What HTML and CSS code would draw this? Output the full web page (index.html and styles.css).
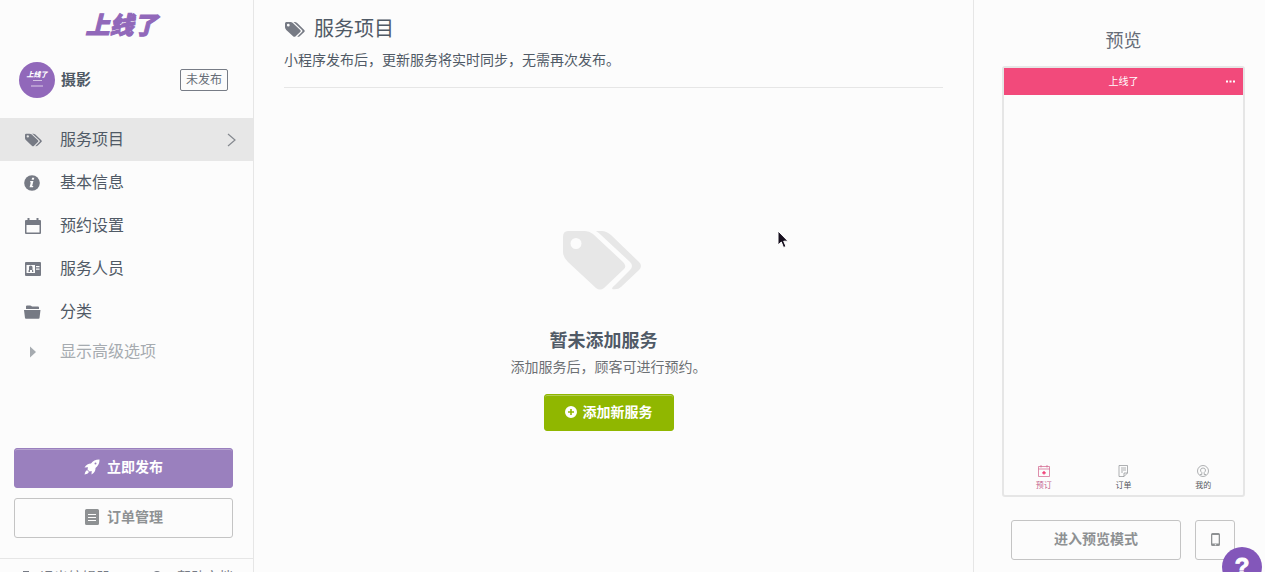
FILE: index.html
```html
<!DOCTYPE html>
<html lang="zh-CN">
<head>
<meta charset="utf-8">
<meta name="viewport" content="width=device-width, initial-scale=1">
<title>上线了 - 服务项目</title>
<link rel="stylesheet" href="styles.css">
</head>
<body>
<svg class="sprite" aria-hidden="true">
  <symbol id="tags" viewBox="0 0 79 59">
    <path d="M5 0H22Q26 0 30 3L60 31Q64 35 61 38L41 57Q37 60 33 57L5 31Q0 26 0 21V6Q0 0 5 0ZM13 7A5.500 5.500 0 1 0 13 18A5.500 5.500 0 1 0 13 7Z" fill-rule="evenodd"/>
    <path d="M33 0H39Q43 0 48 4L76 31Q80 35 76 39L58 56Q55 59 49 58Q49 56 52 54L67 39Q71 35 67 31L38 4Q36 2 33 0Z"/>
  </symbol>
</svg>
<div class="shell">
  <aside class="sidebar">
    <div class="logo">上线了</div>
    <div class="site">
      <div class="avatar"><b class="avatar-name">上线了</b><span class="avatar-line"></span><span class="avatar-sub"></span></div>
      <strong class="site-name">摄影</strong>
      <span class="badge">未发布</span>
    </div>
    <nav class="nav">
      <a class="nav-item active" href="#services">
        <svg class="nav-icon" viewBox="0 0 18 18"><use href="#tags" x="1" y="2" width="17" height="14"/></svg>
        <span>服务项目</span>
        <svg class="chevron" viewBox="0 0 10 16"><path d="M2 2 9 8l-7 6"/></svg>
      </a>
      <a class="nav-item" href="#info">
        <svg class="nav-icon" viewBox="0 0 18 18"><circle cx="8" cy="9" r="7.800"/><path class="cut" d="M8.100 3.800h2.200l-.5 2H7.600zM6.300 7h3.100l-1.200 5h1.100l-.3 1.200H5.600L6.800 8.200H6z"/></svg>
        <span>基本信息</span>
      </a>
      <a class="nav-item" href="#booking">
        <svg class="nav-icon" viewBox="0 0 18 18"><path fill-rule="evenodd" d="M2 3h1.500V1h2v2h7V1h2v2H16q1 0 1 1v12q0 1-1 1H2q-1 0-1-1V4q0-1 1-1zm.5 5v7.500h13V8z"/></svg>
        <span>预约设置</span>
      </a>
      <a class="nav-item" href="#staff">
        <svg class="nav-icon" viewBox="0 0 18 18"><path d="M2 2h14q1 0 1 1v12q0 1-1 1H2q-1 0-1-1V3q0-1 1-1z"/><path class="cut" fill-rule="evenodd" d="M2.500 5h8.500v8H2.500zM4.500 12v-1.500L5 10V7q0-1.500 1.700-1.500T8.500 7v3l.8.500V12H8v-2H6v2zM12 6h3.500v1.200H12zM12 8.500h3.500v1.200H12z"/></svg>
        <span>服务人员</span>
      </a>
      <a class="nav-item" href="#category">
        <svg class="nav-icon" viewBox="0 0 18 18"><path d="M2 6V3.500q0-1 1-1h3q1 0 2 1h6q1 0 1 1V6zM0 7h16.500l-1 8q0 .8-1 .8H2q-1 0-1-.8z"/></svg>
        <span>分类</span>
      </a>
      <button class="nav-item more" type="button">
        <svg class="nav-icon" viewBox="0 0 18 18"><path d="M6 3.500v11L12 9z"/></svg>
        <span>显示高级选项</span>
      </button>
    </nav>
    <div class="actions">
      <button class="btn btn-primary" type="button">
        <svg class="btn-icon" viewBox="0 0 16 16"><path d="M15.500.5Q10 .3 7 4.500 3 4.500.5 8.500L4 8.300 3.500 10.500 5.500 12.500 7.700 12 7.500 15.500Q11.700 13 11.500 9 15.700 6 15.500.5ZM3 11Q1 12 .5 15.500 4 15 5 13Z"/><circle class="porthole" cx="11.500" cy="4.500" r="1"/></svg>
        <span>立即发布</span>
      </button>
      <button class="btn btn-outline" type="button">
        <svg class="btn-icon" viewBox="0 0 16 16"><path fill-rule="evenodd" d="M2.500 0h11Q15 0 15 1.500v13q0 1.500-1.500 1.500h-11Q1 16 1 14.500v-13Q1 0 2.500 0zM4 5v1h8V5zm0 3v1h8V8zm0 3v1h8v-1z"/></svg>
        <span>订单管理</span>
      </button>
    </div>
    <footer class="footer">
      <a class="footer-link" href="#exit"><svg class="footer-icon" viewBox="0 0 12 14"><path d="M3 1h6v12H3z"/></svg>退出编辑器</a>
      <a class="footer-link" href="#docs"><svg class="footer-icon" viewBox="0 0 12 14"><circle cx="6" cy="6" r="5"/></svg>帮助文档</a>
    </footer>
  </aside>

  <main class="main">
    <header class="heading">
      <h1 class="title"><svg class="title-icon" viewBox="0 0 79 59"><use href="#tags"/></svg>服务项目</h1>
      <p class="subtitle">小程序发布后，更新服务将实时同步，无需再次发布。</p>
    </header>
    <section class="empty">
      <svg class="empty-icon" viewBox="0 0 79 59"><use href="#tags"/></svg>
      <h2 class="empty-title">暂未添加服务</h2>
      <p class="empty-text">添加服务后，顾客可进行预约。</p>
      <button class="btn btn-add" type="button">
        <svg class="add-icon" viewBox="0 0 12 12"><path fill-rule="evenodd" d="M6 0a6 6 0 1 1 0 12A6 6 0 0 1 6 0zM5.200 3v2.200H3v1.600h2.200V9h1.600V6.800H9V5.200H6.800V3z"/></svg>
        <span>添加新服务</span>
      </button>
    </section>
  </main>

  <aside class="preview">
    <h2 class="preview-title">预览</h2>
    <div class="phone">
      <div class="phone-bar"><span class="phone-name">上线了</span><svg class="dots" viewBox="0 0 9 3"><path d="M0 .5h2v2H0zM3.500.5h2v2h-2zM7 .5h2v2H7z"/></svg></div>
      <div class="tabs">
        <div class="tab selected"><svg class="tab-icon" viewBox="0 0 12 12"><path d="M.5 1.500h11v10H.5zM.5 4h11M3 0v2.500M9 0v2.500"/><path class="plus" d="M6 6v3.600M4.200 7.800h3.600"/></svg><span>预订</span></div>
        <div class="tab"><svg class="tab-icon" viewBox="0 0 12 12"><path d="M2 .5h8.500V8l-3.500 3.500H2zM10.500 8H7v3.500M4 3h5M4 5h5M4 7h2"/></svg><span>订单</span></div>
        <div class="tab"><svg class="tab-icon" viewBox="0 0 12 12"><circle cx="6" cy="6" r="5.500"/><path d="M3 9.500h1.800V7.500Q3.500 6.500 3.500 5 3.800 3 6 3T8.500 5Q8.500 6.500 7.200 7.500v2H9"/></svg><span>我的</span></div>
      </div>
    </div>
    <div class="preview-actions">
      <button class="btn btn-outline btn-preview" type="button">进入预览模式</button>
      <button class="btn btn-outline btn-phone" type="button" aria-label="手机预览"><svg class="device" viewBox="0 0 9 13"><path fill-rule="evenodd" d="M1.500 0h6Q9 0 9 1.500v10Q9 13 7.500 13h-6Q0 13 0 11.500v-10Q0 0 1.500 0zM1.300 2v8.500h6.400V2zM3.800 11.200v1h1.400v-1z"/></svg></button>
    </div>
  </aside>
</div>
<button class="help" type="button" aria-label="帮助">?</button>
<svg class="cursor" viewBox="0 0 12 19" aria-hidden="true"><path d="M1 1v14l3.300-3 2.200 5.500 2.500-1-2.300-5.300H11z"/></svg>
</body>
</html>
```
FILE: styles.css
```css
* { box-sizing: border-box; }
body {
  margin: 0;
  background: #fcfcfc;
  color: #505a66;
  font-family: "Liberation Sans", "Noto Sans CJK SC", sans-serif;
  font-size: 14px;
  line-height: 20px;
  overflow: hidden;
}
h1, h2, p { margin: 0; font-weight: 400; }
button { font: inherit; cursor: pointer; }
a { color: inherit; text-decoration: none; }
svg { flex: none; fill: currentColor; }
.sprite { position: absolute; width: 0; height: 0; }

.shell {
  display: grid;
  grid-template-columns: 254px 1fr 292px;
  height: 100vh;
  overflow: hidden;
}

/* Sidebar */
.sidebar {
  display: flex;
  flex-direction: column;
  min-height: 0;
  border-right: 1px solid #e6e6e6;
  overflow: hidden;
}
.logo {
  padding: 12px 10px 0 0;
  color: #9168ba;
  font-size: 24px;
  font-style: italic;
  font-weight: 900;
  line-height: 28px;
  text-align: center;
  -webkit-text-stroke: 1px currentColor;
}
.site {
  display: flex;
  align-items: center;
  gap: 6px;
  padding: 22px 25px 20px 19px;
}
.avatar {
  display: flex;
  flex-direction: column;
  align-items: center;
  width: 36px;
  height: 36px;
  padding-top: 8px;
  border-radius: 50%;
  background: #9168ba;
  color: #fff;
}
.avatar-name { font-size: 7px; font-style: italic; line-height: 10px; font-weight: 900; }
.avatar-line { width: 9px; height: 1px; background: #d3c2e3; }
.avatar-sub { width: 12px; height: 2px; margin-top: 4px; background: #b79bd1; }
.site-name { flex: 1; font-size: 15px; }
.badge {
  padding: 0 5px;
  border: 1px solid #777c86;
  border-radius: 2px;
  color: #666c77;
  font-size: 12px;
}
.nav { display: flex; flex-direction: column; }
.nav-item {
  display: flex;
  align-items: center;
  gap: 18px;
  height: 43px;
  padding: 0 17px 0 24px;
  font-size: 16px;
}
.nav-item span { flex: 1; text-align: left; }
.nav-icon { width: 18px; height: 18px; color: #767a84; }
.nav-item.active { background: #e7e7e7; }
.cut { fill: #fcfcfc; }
.chevron { width: 10px; height: 16px; fill: none; stroke: #85898f; stroke-width: 1.2; }
.more {
  height: 37px;
  border: 0;
  background: none;
  color: #a6abb0;
}
.more .nav-icon { color: #a6abb0; }
.actions {
  display: flex;
  flex-direction: column;
  gap: 10px;
  padding: 78px 20px 20px 14px;
}
.btn {
  display: flex;
  align-items: center;
  justify-content: center;
  gap: 7px;
  height: 40px;
  padding: 0 0 2px;
  border: 1px solid transparent;
  border-radius: 3px;
  font-weight: 700;
}
.btn-icon { width: 16px; height: 16px; }
.porthole { fill: #9a80be; }
.btn-primary {
  border-color: #9a80be;
  background: #9a80be;
  box-shadow: inset 0 1px #b6a3d0;
  color: #fff;
}
.btn-outline {
  border-color: #c4c4c4;
  background: transparent;
  color: #8e9193;
}
.footer {
  display: flex;
  justify-content: space-between;
  flex: none;
  padding: 8px 20px;
  border-top: 1px solid #e6e6e6;
  color: #767a84;
}
.footer-link { display: flex; align-items: center; gap: 8px; white-space: nowrap; }
.footer-link + .footer-link { gap: 14px; }
.footer-icon { width: 12px; height: 14px; }

/* Service list */
.main { min-width: 0; padding: 0 30px; }
.heading { padding: 15px 0 17px; border-bottom: 1px solid #e6e6e6; }
.title {
  display: flex;
  align-items: center;
  gap: 9px;
  padding-left: 1px;
  font-size: 20px;
  line-height: 28px;
}
.title-icon { width: 20px; height: 15px; color: #767a84; }
.subtitle { padding-top: 7px; }
.empty {
  display: flex;
  flex-direction: column;
  align-items: center;
  padding: 143px 10px 0 0;
}
.empty-icon { width: 79px; height: 59px; margin-right: 12px; color: #e7e7e7; }
.empty-title {
  margin-right: 10px;
  padding-top: 38px;
  font-size: 18px;
  font-weight: 700;
  line-height: 26px;
}
.empty-text { padding: 3px 0 17px; color: #6c7074; }
.btn-add {
  width: 130px;
  height: 37px;
  gap: 6px;
  border-color: #90b700;
  background: #90b700;
  box-shadow: inset 0 1px #b2cc55;
  color: #fff;
}
.add-icon { width: 12px; height: 12px; }

/* Preview */
.preview {
  padding: 27px 20px 0 28px;
  border-left: 1px solid #e6e6e6;
}
.preview-title { color: #666c77; font-size: 18px; line-height: 28px; text-align: center; }
.phone {
  display: flex;
  flex-direction: column;
  height: 431px;
  margin-top: 11px;
  border: 2px solid #e6e6e6;
  border-radius: 3px;
}
.phone-bar {
  display: grid;
  grid-template-columns: 1fr auto 1fr;
  align-items: center;
  height: 27px;
  padding: 0 8px;
  background: #f24a7b;
  color: #fff;
  font-size: 10px;
}
.phone-name { grid-column: 2; }
.dots { width: 9px; height: 3px; justify-self: end; }
.tabs { display: grid; grid-template-columns: repeat(3, 1fr); margin-top: auto; padding-bottom: 3px; }
.tab {
  display: flex;
  flex-direction: column;
  align-items: center;
  gap: 3px;
  color: #55585c;
  font-size: 8px;
  line-height: 12px;
}
.tab-icon { width: 12px; height: 12px; fill: none; stroke: #8e9193; stroke-width: 0.7; }
.tab.selected { color: #c5658f; }
.selected .tab-icon { stroke: #d1608a; }
.selected .plus { stroke: #f0306c; stroke-width: 1.2; }
.preview-actions { display: flex; gap: 14px; padding: 23px 10px 0 9px; }
.btn-preview { flex: 1; }
.btn-phone { width: 40px; }
.device { width: 9px; height: 13px; }

/* Floating layer */
.help {
  position: fixed;
  right: 3px;
  bottom: -15px;
  width: 40px;
  height: 40px;
  padding: 0;
  border: 0;
  border-radius: 50%;
  background: #8357ba;
  color: #fff;
  font-size: 24px;
  font-weight: 700;
  line-height: 36px;
  -webkit-text-stroke: 1px currentColor;
}
.cursor {
  position: fixed;
  top: 230px;
  left: 777px;
  width: 12px;
  height: 19px;
  fill: #17101f;
  stroke: #fff;
  stroke-width: 1;
  pointer-events: none;
}
```
